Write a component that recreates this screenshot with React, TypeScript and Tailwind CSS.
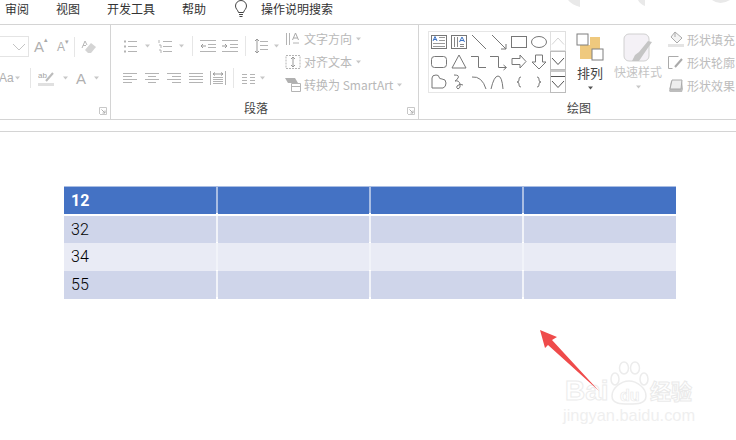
import type { ReactNode } from "react";

const cjk = "font-['Noto_Sans_CJK_SC','Liberation_Sans',sans-serif]";
const G = "#b4b4b4";

function Caret({ dark }: { dark?: boolean }) {
  return (
    <svg width="7" height="4" viewBox="0 0 7 4" className="shrink-0">
      <path d="M1 0.5h5L3.500 3.500z" fill={dark ? "#555" : "#c8c8c8"} />
    </svg>
  );
}

function Ico({ w = 16, h = 16, children }: { w?: number; h?: number; children: ReactNode }) {
  return (
    <svg width={w} height={h} viewBox={`0 0 ${w} ${h}`} fill="none" stroke={G} strokeWidth="1" className="shrink-0">
      {children}
    </svg>
  );
}

function Sep({ h = 20 }: { h?: number }) {
  return <div className="w-px bg-[#e6e6e6] shrink-0" style={{ height: h }} />;
}

function Launcher() {
  return (
    <svg width="8" height="8" viewBox="0 0 8 8" fill="none" className="shrink-0">
      <path d="M0.500 7V0.500H7.500V7.500H1" stroke="#c8c8c8" />
      <path d="M2.500 2.500L6 6M6 3.500V6H3.500" stroke="#b0b0b0" />
    </svg>
  );
}

function Lines({ ys, x1 = 1, x2 = 14 }: { ys: number[]; x1?: number; x2?: number }) {
  return (
    <>
      {ys.map((y) => (
        <path key={y} d={`M${x1} ${y + 0.5}H${x2}`} />
      ))}
    </>
  );
}

function Align({ short }: { short: "l" | "c" | "r" | "n" }) {
  const ys = [3, 6, 9, 12];
  return (
    <Ico w={14} h={16}>
      {ys.map((y, i) => {
        const odd = i % 2 === 1 && short !== "n";
        const a = odd ? (short === "l" ? 0 : short === "c" ? 3 : 5) : 0;
        const b = odd ? (short === "l" ? 9 : short === "c" ? 11 : 14) : 14;
        return <path key={y} d={`M${a} ${y + 0.5}H${b}`} />;
      })}
    </Ico>
  );
}

function Shape({ children }: { children: ReactNode }) {
  return (
    <svg width="20" height="20" viewBox="0 0 20 20" fill="none" stroke="#777" strokeWidth="1">
      {children}
    </svg>
  );
}

function ShapeGallery() {
  return (
    <div className="mt-[6px] w-[122px] h-[62px] border border-[#e6e6e6] border-r-0 grid grid-cols-[repeat(6,20px)] grid-rows-[repeat(3,20px)] shrink-0">
      <Shape>
        <rect x="2.500" y="3.500" width="15" height="13" />
        <path d="M4 9l2-4.500L8 9M4.500 7.500h3" stroke="#3f74c4" />
        <path d="M10 5.500h6M10 8.500h6M4 11.500h12M4 14.500h12" stroke="#999" />
      </Shape>
      <Shape>
        <rect x="2.500" y="3.500" width="15" height="13" />
        <path d="M5.500 5v10M8.500 5v10" stroke="#888" />
        <path d="M10.500 10l2.500-5 2.500 5M11 8.500h4" stroke="#3f74c4" />
        <path d="M11 12.500h4M11 14.500h4" stroke="#888" />
      </Shape>
      <Shape>
        <path d="M3 3l14 14" />
      </Shape>
      <Shape>
        <path d="M3 3l14 14M17 12v5h-5" />
      </Shape>
      <Shape>
        <rect x="2.500" y="4.500" width="15" height="11" />
      </Shape>
      <Shape>
        <ellipse cx="10" cy="10" rx="7.500" ry="5.500" />
      </Shape>
      <Shape>
        <rect x="2.500" y="4.500" width="15" height="11" rx="3" />
      </Shape>
      <Shape>
        <path d="M10 3L17 16H3z" />
      </Shape>
      <Shape>
        <path d="M2 4.500H9.500V15.500H17" />
      </Shape>
      <Shape>
        <path d="M1 4.500H9.500V15.500H17M14.500 13l3 2.500-3 2.500" />
      </Shape>
      <Shape>
        <path d="M3 6.500h8V3l6 6.500L11 16v-3.500H3z" />
      </Shape>
      <Shape>
        <path d="M6.500 3h7v7h3.500L10 17 3 10h3.500z" />
      </Shape>
      <Shape>
        <path d="M3 16V6q0-3 4-3 3 0 3 2t3 2q4 0 4 4t-3 5z" />
      </Shape>
      <Shape>
        <path d="M5 3q6 0 4 3T6 9q4-1 5 3t-2 5q-2-1-1-3 3-3 6-1" />
      </Shape>
      <Shape>
        <path d="M3 5q10-1 14 12" />
      </Shape>
      <Shape>
        <path d="M2 17Q5 4 9 4t5 13" />
      </Shape>
      <Shape>
        <path d="M12 5q-2 0-2 2v1q0 2-2 2 2 0 2 2v1q0 2 2 2" />
      </Shape>
      <Shape>
        <path d="M8 5q2 0 2 2v1q0 2 2 2-2 0-2 2v1q0 2-2 2" />
      </Shape>
    </div>
  );
}

function ScrollButtons() {
  return (
    <div className="mt-[6px] w-[16px] h-[62px] flex flex-col shrink-0">
      <div className="h-[20px] border border-[#e0e0e0] flex items-center justify-center">
        <svg width="14" height="8" viewBox="0 0 14 8" fill="none">
          <path d="M1 7.500L7 1l6 6.500" stroke="#d4d4d4" />
        </svg>
      </div>
      <div className="h-[19px] border border-[#bcbcbc] flex items-center justify-center">
        <svg width="14" height="8" viewBox="0 0 14 8" fill="none">
          <path d="M1 1l6 6.500L13 1" stroke="#555" />
        </svg>
      </div>
      <div className="h-[23px] border border-[#bcbcbc] border-t-[2px] border-t-[#c8c8c8] flex flex-col items-center justify-center gap-[3px]">
        <div className="w-[14px] h-px bg-[#555]" />
        <svg width="14" height="8" viewBox="0 0 14 8" fill="none">
          <path d="M1 1l6 6.500L13 1" stroke="#555" />
        </svg>
      </div>
    </div>
  );
}

function FontGroup() {
  return (
    <div className="w-[111px] shrink-0 border-r border-[#d4d4d4] relative flex flex-col">
      <div className="h-[21px] mt-[11px] flex items-center">
        <div className="w-[29px] h-[21px] border border-l-0 border-[#e4e4e4] flex items-center justify-end pr-[2px]">
          <svg width="14" height="8" viewBox="0 0 14 8" fill="none">
            <path d="M1 1l6 6 6-6" stroke="#c4c4c4" />
          </svg>
        </div>
        <span className="ml-[5px] w-[22px] text-[15px] leading-none text-[#b0b0b0] font-['Liberation_Sans',sans-serif] relative">
          A<span className="absolute left-[10px] top-[-3px] text-[7px] text-[#aaa]">▴</span>
        </span>
        <span className="w-[17px] text-[12px] leading-none text-[#b0b0b0] font-['Liberation_Sans',sans-serif] relative ml-[1px]">
          A<span className="absolute left-[8px] top-[-3px] text-[7px] text-[#aaa]">▾</span>
        </span>
        <Sep h={20} />
        <svg width="17" height="16" viewBox="0 0 17 16" className="ml-[6px]">
          <path d="M4 11l6-7 5 4-5 6H7z" fill="#d4d4d4" />
          <path d="M1 9l3-7 2 4M2 6.500h3" fill="none" stroke="#b8b8b8" />
        </svg>
      </div>
      <div className="h-[20px] mt-[11px] flex items-center">
        <span className="w-[12px] text-[12px] leading-none text-[#b0b0b0] font-['Liberation_Sans',sans-serif] ml-[-1px] mr-[3px]">Aa</span>
        <Caret />
        <div className="w-[9px]" />
        <Sep h={20} />
        <svg width="18" height="17" viewBox="0 0 18 17" className="ml-[7px]">
          <path d="M0 13h16v3H0z" fill="#e0e0e0" />
          <path d="M8 11l7-8" stroke="#bcbcbc" strokeWidth="2" />
          <text x="0" y="8" fontSize="8" fill="#a4a4a4" fontFamily="Liberation Sans">ab</text>
        </svg>
        <span className="ml-[6px]"><Caret /></span>
        <span className="ml-[7px] text-[15px] leading-none text-[#b0b0b0] font-['Liberation_Sans',sans-serif]">A</span>
        <span className="ml-[7px]"><Caret /></span>
      </div>
      <div className="absolute right-[3px] bottom-[4px]"><Launcher /></div>
    </div>
  );
}

function ParagraphGroup() {
  return (
    <div className="w-[308px] shrink-0 border-r border-[#d4d4d4] relative flex">
      <div className="w-[174px] pl-[12px] shrink-0 flex flex-col">
        <div className="h-[20px] mt-[11px] flex items-center">
          <Ico w={14}>
            <Lines ys={[3, 8, 13]} x1={5} />
            <path d="M1 3.500h2M1 8.500h2M1 13.500h2" strokeWidth="2" />
          </Ico>
          <span className="ml-[7px]"><Caret /></span>
          <span className="ml-[7px]">
            <Ico w={14}>
              <Lines ys={[3, 8, 13]} x1={5} />
              <path d="M1 2v3M1 7h2v3M1 12h2v3" strokeWidth="1" />
            </Ico>
          </span>
          <span className="ml-[6px]"><Caret /></span>
          <span className="ml-[7px]"><Sep /></span>
          <span className="ml-[7px]">
            <Ico>
              <Lines ys={[2, 13]} x1={0} x2={16} />
              <Lines ys={[6, 9]} x1={8} x2={16} />
              <path d="M6 8H1M3 6L1 8l2 2" stroke="#999" />
            </Ico>
          </span>
          <span className="ml-[6px]">
            <Ico>
              <Lines ys={[2, 13]} x1={0} x2={16} />
              <Lines ys={[6, 9]} x1={8} x2={16} />
              <path d="M0 8h5M3 6l2 2-2 2" stroke="#999" />
            </Ico>
          </span>
          <span className="ml-[7px]"><Sep /></span>
          <span className="ml-[8px]">
            <Ico w={14}>
              <Lines ys={[3, 7, 11]} x1={6} />
              <path d="M3 1v14M1 3l2-2 2 2M1 13l2 2 2-2" stroke="#999" />
            </Ico>
          </span>
          <span className="ml-[5px]"><Caret /></span>
        </div>
        <div className="h-[20px] mt-[12px] flex items-center">
          <Align short="l" />
          <span className="ml-[8px]"><Align short="c" /></span>
          <span className="ml-[8px]"><Align short="r" /></span>
          <span className="ml-[8px]"><Align short="n" /></span>
          <span className="ml-[7px]">
            <Ico>
              <path d="M0.500 1v14M15.500 1v14" />
              <Lines ys={[7, 9, 11, 13]} x1={3} x2={13} />
              <path d="M3 4h10M5 2.500L3 4l2 1.500M11 2.500L13 4l-2 1.500" stroke="#999" />
            </Ico>
          </span>
          <span className="ml-[7px]"><Sep /></span>
          <span className="ml-[8px]">
            <Ico w={13}>
              <Lines ys={[4, 7, 10, 13]} x1={0} x2={5} />
              <Lines ys={[4, 7, 10, 13]} x1={8} x2={13} />
            </Ico>
          </span>
          <span className="ml-[4px]"><Caret /></span>
        </div>
      </div>
      <div className={`flex flex-col pt-[2px] text-[12px] leading-[23px] text-[#b8b8b8] ${cjk}`}>
        <div className="h-[23px] flex items-center">
          <Ico w={16}>
            <path d="M1.500 2v12M4.500 2v12" />
            <path d="M7.500 9l3-7 3 7M8.500 7h4" stroke="#a8a8a8" />
            <path d="M8 12h6" />
          </Ico>
          <span className="ml-[3px]">文字方向</span>
          <span className="ml-[3px]"><Caret /></span>
        </div>
        <div className="h-[23px] flex items-center">
          <Ico w={16}>
            <path d="M1 1.500h14v13H1z" strokeDasharray="2 1" />
            <path d="M8 3v10M6 5l2-2 2 2M6 11l2 2 2-2" stroke="#999" />
          </Ico>
          <span className="ml-[3px]">对齐文本</span>
          <span className="ml-[3px]"><Caret /></span>
        </div>
        <div className="h-[23px] flex items-center">
          <svg width="16" height="15" viewBox="0 0 16 15" className="shrink-0">
            <path d="M0 1h10l3 5H3z" fill="#b0b0b0" />
            <path d="M6.500 6.500h9v8h-9zM6.500 9.500h9" fill="#fff" stroke="#b4b4b4" />
          </svg>
          <span className="ml-[3px]">转换为 SmartArt</span>
          <span className="ml-[3px]"><Caret /></span>
        </div>
      </div>
      <div className="absolute right-[3px] bottom-[4px]"><Launcher /></div>
      <div className={`absolute left-[133px] top-[74px] text-[12px] leading-[17px] text-[#444] ${cjk}`}>段落</div>
    </div>
  );
}

function DrawingGroup() {
  return (
    <div className="flex-1 flex pl-[9px] relative">
      <ShapeGallery />
      <ScrollButtons />
      <div className={`w-[48px] pt-[8px] flex flex-col items-center text-[13px] text-[#444] ${cjk}`}>
        <svg width="28" height="29" viewBox="0 0 28 29">
          <path d="M4 12h10v-8h10v12h-8v10H4z" fill="#efc97e" />
          <rect x="1" y="1" width="11" height="11" fill="#fff" stroke="#7f7f7f" />
          <rect x="16" y="16" width="11" height="11" fill="#fff" stroke="#7f7f7f" />
        </svg>
        <span className="leading-[17px] mt-[2px]">排列</span>
        <span className="mt-[5px]"><Caret dark /></span>
      </div>
      <div className={`w-[48px] pt-[8px] flex flex-col items-center text-[12px] text-[#c4c4c4] ${cjk}`}>
        <svg width="30" height="30" viewBox="0 0 30 30">
          <rect x="1" y="1" width="25" height="27" rx="5" fill="#f4f1f6" stroke="#d0d0d0" />
          <path d="M29 9L20 22l-4 6h-7l3-6 4-3 9-11z" fill="#c5c5c5" />
        </svg>
        <span className="leading-[17px] whitespace-nowrap">快速样式</span>
        <span className="mt-[5px]"><Caret /></span>
      </div>
      <div className={`ml-[6px] pt-[3px] flex flex-col text-[12px] text-[#bcbcbc] whitespace-nowrap ${cjk}`}>
        <div className="h-[23px] flex items-center gap-[2px]">
          <svg width="17" height="17" viewBox="0 0 17 17" className="shrink-0">
            <path d="M0 13h16v3H0z" fill="#e4e4e4" />
            <path d="M7 1l7 6-5 5-6-6z" fill="#f4f4f4" stroke="#aaa" />
            <path d="M7 1v5" stroke="#aaa" />
          </svg>
          形状填充
        </div>
        <div className="h-[23px] flex items-center gap-[2px]">
          <svg width="17" height="17" viewBox="0 0 17 17" fill="none" className="shrink-0">
            <path d="M0.500 14.500V2.500h10M0.500 14.500h4" stroke="#aaa" />
            <path d="M7 13l7-8" stroke="#aaa" strokeWidth="2" />
          </svg>
          形状轮廓
        </div>
        <div className="h-[23px] flex items-center gap-[2px]">
          <svg width="17" height="17" viewBox="0 0 17 17" className="shrink-0">
            <path d="M1 14l2-10h11l1 8-1 3H2z" fill="#bdbdbd" />
            <path d="M2 12l2-9h10l-1 9z" fill="#eee" stroke="#aaa" />
          </svg>
          形状效果
        </div>
      </div>
      <div className={`absolute left-[148px] top-[74px] text-[12px] leading-[17px] text-[#444] ${cjk}`}>绘图</div>
    </div>
  );
}

const cols = "grid grid-cols-[152px_151px_151px_152px] gap-x-[2px]";

const rows = [
  { label: "32", bg: "bg-[#cfd5ea]", h: "h-[26px]" },
  { label: "34", bg: "bg-[#e9ebf5]", h: "h-[27px]" },
  { label: "55", bg: "bg-[#cfd5ea]", h: "h-[26px]" },
];

function SlideTable() {
  return (
    <div className="w-[612px] flex flex-col font-['Roboto','Liberation_Sans',sans-serif] text-[16px] text-black">
      <div className={`${cols} h-[27px] mb-[3px] py-px bg-[#a9bde3]`}>
        <div className="bg-[#4472c4] pl-[7px] font-bold text-white leading-[27px]">12</div>
        <div className="bg-[#4472c4]" />
        <div className="bg-[#4472c4]" />
        <div className="bg-[#4472c4]" />
      </div>
      <div className="flex flex-col gap-y-px">
        {rows.map((r) => (
          <div key={r.label} className={`${cols} ${r.h} bg-[#f1f3f9]`}>
            <div className={`${r.bg} pl-[7px] font-light leading-[28px]`}>{r.label}</div>
            <div className={r.bg} />
            <div className={r.bg} />
            <div className={r.bg} />
          </div>
        ))}
      </div>
    </div>
  );
}

export default function App() {
  return (
    <div className={`w-[736px] h-[440px] bg-white relative overflow-hidden ${cjk}`}>
      {/* Tabs */}
      <div className="h-[25px] border-b border-[#d4d4d4] flex items-start text-[12px] leading-[17px] text-[#333] pl-[5px]">
        <span className="w-[51px]">审阅</span>
        <span className="w-[51px]">视图</span>
        <span className="w-[75px]">开发工具</span>
        <span className="w-[52px]">帮助</span>
        <svg width="14" height="18" viewBox="0 0 14 18" fill="none" stroke="#444" className="mr-[13px]">
          <path d="M4.500 12.500C4 10 1.500 9 1.500 6a5.500 5.500 0 0 1 11 0c0 3-2.500 4-3 6.500z" />
          <path d="M5 14.500h4M5.500 16.500h3" />
        </svg>
        <span>操作说明搜索</span>
      </div>

      {/* Ribbon */}
      <div className="h-[95px] border-b border-[#d4d4d4] flex">
        <FontGroup />
        <ParagraphGroup />
        <DrawingGroup />
      </div>
      <div className="h-[12px] border-b border-[#d4d4d4]" />

      {/* Slide */}
      <div className="pt-[54px] pl-[64px]">
        <SlideTable />
      </div>

      {/* Faint watermark scraps at the top */}
      <svg width="736" height="10" viewBox="0 0 736 10" className="absolute left-0 top-0">
        <path d="M568 0q4 5 12 7V0zM638 0q2 4 7 6V0zM712 0q8 6 18 0z" fill="#e9e9e9" />
      </svg>

      {/* Baidu watermark */}
      <div className="absolute left-[563px] top-[360px] w-[135px] h-[66px] font-['Liberation_Sans',sans-serif]">
        <span className="absolute left-[2px] top-[17px] text-[28px] leading-none font-bold text-white [-webkit-text-stroke:1px_#ececec]">Bai</span>
        <svg width="40" height="45" viewBox="0 0 40 45" className="absolute left-[46px] top-[1px]" fill="#fff" stroke="#ececec" strokeWidth="1.500">
          <ellipse cx="6" cy="18" rx="4" ry="6" />
          <ellipse cx="15" cy="7" rx="4.500" ry="6" />
          <ellipse cx="26" cy="7" rx="4.500" ry="6" />
          <ellipse cx="35" cy="18" rx="4" ry="6" />
          <path d="M3 35c0-8 9-15 17-15s17 7 17 15c0 8-9 8-17 8s-17 0-17-8z" />
        </svg>
        <span className="absolute left-[57px] top-[28px] text-[16px] leading-none font-bold text-white [-webkit-text-stroke:0.7px_#eaeaea]">du</span>
        <span className={`absolute left-[87px] top-[20px] text-[21px] leading-none font-bold text-white [-webkit-text-stroke:1px_#eaeaea] whitespace-nowrap ${cjk}`}>经验</span>
        <span className="absolute left-0 top-[47px] text-[16.4px] leading-none text-[#efefef] whitespace-nowrap">jingyan.baidu.com</span>
      </div>

      {/* Red arrow */}
      <svg width="60" height="64" viewBox="0 0 60 64" className="absolute left-[540px] top-[330px]">
        <path d="M0 0L17 7 12 10 59 61 8 15 5 18z" fill="#ef4b4b" />
      </svg>
    </div>
  );
}
